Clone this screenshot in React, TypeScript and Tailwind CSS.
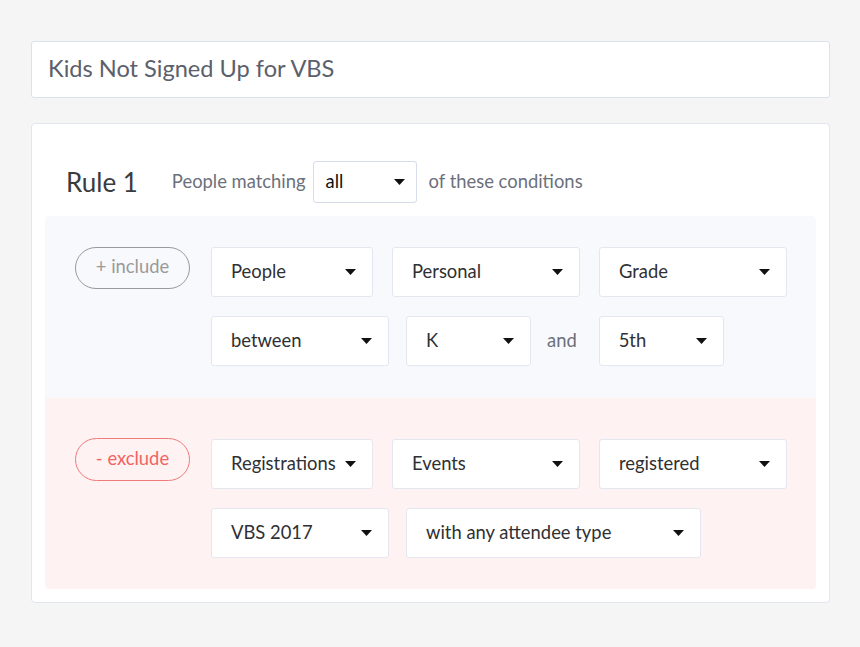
import React from "react";

function Caret() {
  return (
    <svg width="11" height="6" viewBox="0 0 11 6" className="shrink-0">
      <path d="M0 0 L11 0 L5.5 6 Z" fill="#111" />
    </svg>
  );
}

function Select({ label, w, h = "h-[50px]" }: { label: string; w: string; h?: string }) {
  return (
    <div
      className={`${w} ${h} flex items-center justify-between pl-[19px] pr-4 bg-white border border-[#e4e7f0] rounded-[3px] text-[18.4px] text-[#2f3033]`}
    >
      <span>{label}</span>
      <Caret />
    </div>
  );
}

export default function App() {
  return (
    <div
      className="w-[860px] h-[647px] bg-[#f5f5f5] pt-[41px] pl-[31px] pr-[30px]"
      style={{ fontFamily: "Lato, 'Open Sans', sans-serif" }}
    >
      <div className="h-[57px] bg-white border border-[#dde1ec] rounded-[3px] flex items-center px-4 pb-[1px] text-[23.6px] text-[#5b606b]">
        Kids Not Signed Up for VBS
      </div>

      <div className="mt-[25px] bg-white border border-[#e2e6f0] rounded-[4px] p-[13px]">
        <div className="h-[79px] flex items-center pl-[21px] pt-[11px]">
          <span className="text-[26px] text-[#3a3b3e]">Rule 1</span>
          <span className="ml-[34px] text-[18.4px] text-[#6b707b]">People matching</span>
          <div className="ml-[7px] w-[104px] h-[42px] flex items-center justify-between pl-3 pr-[11px] bg-white border border-[#d6dcea] rounded-[3px] text-[18.4px] text-[#111]">
            <span>all</span>
            <Caret />
          </div>
          <span className="ml-[12px] text-[18.4px] text-[#6b707b]">of these conditions</span>
        </div>

        <div className="rounded-t-[4px] bg-[#f8f9fc] pt-[31px] pb-[32px] pl-[30px] flex gap-[21px]">
          <div className="w-[115px] h-[42px] rounded-full border border-[#9a9a9a] flex items-center justify-center text-[18.4px] text-[#9a9a9a] pb-[2px]">
            + include
          </div>
          <div className="flex flex-col gap-[19px]">
            <div className="flex gap-[19px]">
              <Select label="People" w="w-[162px]" />
              <Select label="Personal" w="w-[188px]" />
              <Select label="Grade" w="w-[188px]" />
            </div>
            <div className="flex items-center">
              <Select label="between" w="w-[178px]" />
              <div className="ml-[17px]">
                <Select label="K" w="w-[125px]" />
              </div>
              <span className="ml-[16px] mr-[22px] text-[18.4px] text-[#6b707b]">and</span>
              <Select label="5th" w="w-[125px]" />
            </div>
          </div>
        </div>

        <div className="rounded-b-[4px] bg-[#fff2f2] pt-[40px] pb-[31px] pl-[30px] flex gap-[21px]">
          <div className="w-[115px] h-[43px] rounded-full border border-[#f07a7a] flex items-center justify-center text-[18.4px] text-[#f06464] pb-[2px]">
            - exclude
          </div>
          <div className="flex flex-col gap-[19px] pt-[1px]">
            <div className="flex gap-[19px]">
              <Select label="Registrations" w="w-[162px]" />
              <Select label="Events" w="w-[188px]" />
              <Select label="registered" w="w-[188px]" />
            </div>
            <div className="flex gap-[17px]">
              <Select label="VBS 2017" w="w-[178px]" />
              <Select label="with any attendee type" w="w-[295px]" />
            </div>
          </div>
        </div>
      </div>
    </div>
  );
}
